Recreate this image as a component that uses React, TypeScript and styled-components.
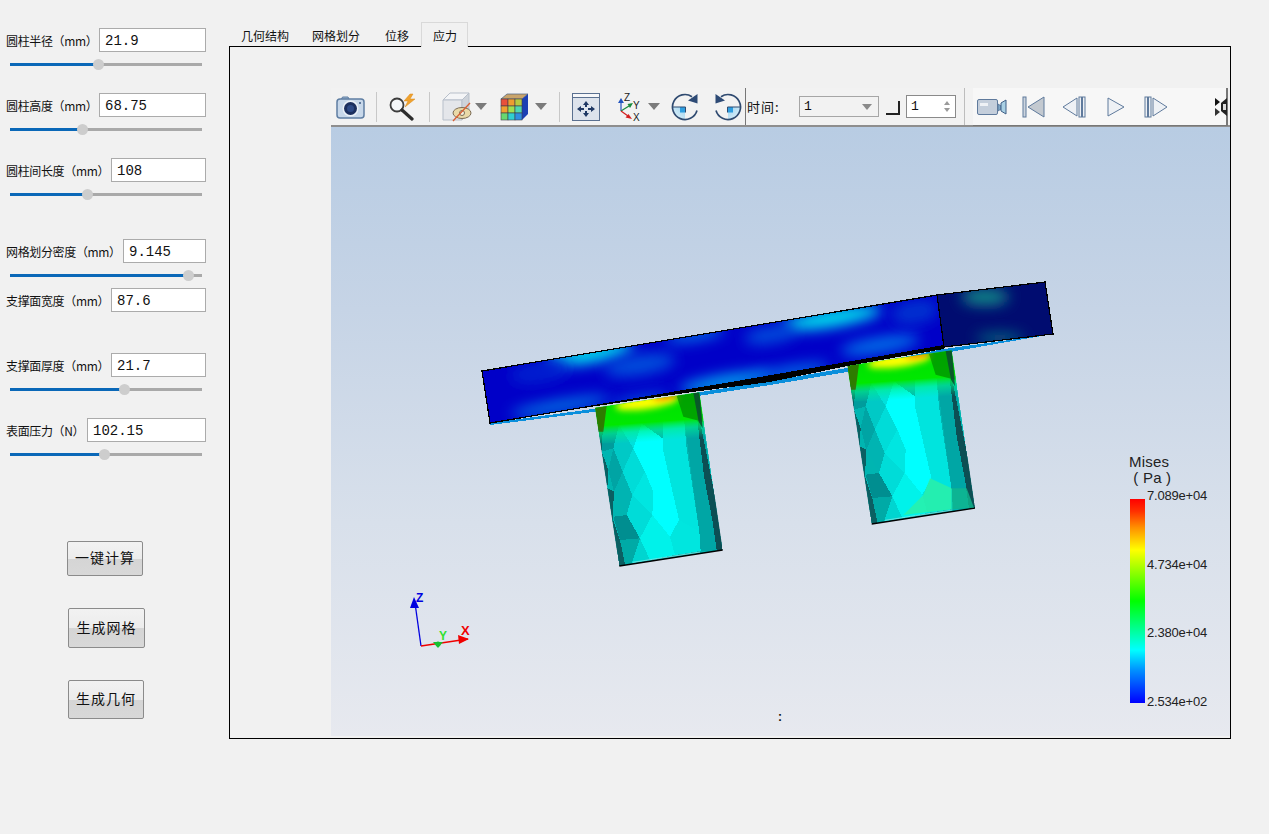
import React from "react";
import styled, { createGlobalStyle } from "styled-components";

const GlobalStyle = createGlobalStyle`
  html, body {
    margin: 0;
    padding: 0;
    background: #f1f1f1;
    overflow: hidden;
  }
  * { box-sizing: border-box; }
`;

const cjk = `"Noto Sans CJK SC", "Noto Sans", sans-serif`;

const Page = styled.div`
  width: 1269px;
  height: 834px;
  display: flex;
  background: #f1f1f1;
  color: #111;
  font-family: ${cjk};
`;

const SidePanel = styled.aside`
  width: 229px;
  padding-top: 28px;
  display: flex;
  flex-direction: column;
`;

const ParamGroup = styled.div<{ $h: number }>`
  height: ${(p) => p.$h}px;
`;

const ParamRow = styled.div`
  width: 206px;
  height: 24px;
  padding-left: 6px;
  display: flex;
  align-items: center;
  justify-content: space-between;
`;

const ParamLabel = styled.span`
  font-size: 12px;
  white-space: nowrap;
  letter-spacing: -0.35px;
`;

const ValueBox = styled.div<{ $w: number }>`
  width: ${(p) => p.$w}px;
  height: 24px;
  padding-left: 5px;
  background: #fff;
  border: 1px solid #ababab;
  font: 14px/25px "Liberation Mono", monospace;
`;

const Slider = styled.div`
  position: relative;
  width: 192px;
  height: 3px;
  margin: 11px 0 0 10px;
  background: #a9a9a9;
`;

const SliderFill = styled.div`
  height: 3px;
  background: #0a68b8;
`;

const SliderThumb = styled.div`
  position: absolute;
  top: -4px;
  width: 11px;
  height: 11px;
  margin-left: -5px;
  border-radius: 50%;
  background: #cdcdcd;
`;

const ActionList = styled.div`
  margin-top: 58px;
  display: flex;
  flex-direction: column;
  gap: 32px;
`;

const ActionButton = styled.div<{ $w: number; $h: number; $ml: number }>`
  width: ${(p) => p.$w}px;
  height: ${(p) => p.$h}px;
  margin-left: ${(p) => p.$ml}px;
  padding-bottom: 3px;
  display: flex;
  align-items: center;
  justify-content: center;
  border: 1px solid #8b8b8b;
  border-radius: 2px;
  font-size: 14px;
  letter-spacing: 1px;
  background: linear-gradient(#f2f2f2 0%, #ececec 50%, #d5d5d5 51%, #d8d8d8 100%);
`;

const Main = styled.main`
  width: 1002px;
  padding-top: 22px;
`;

const TabBar = styled.div`
  display: flex;
  height: 24px;
`;

const Tab = styled.div<{ $active?: boolean; $w: number }>`
  width: ${(p) => p.$w}px;
  height: 25px;
  padding-left: 11px;
  font-size: 12px;
  line-height: 25px;
  position: relative;
  z-index: 1;
  border: 1px solid ${(p) => (p.$active ? "#d9d9d9" : "transparent")};
  border-bottom: 0;
  background: ${(p) => (p.$active ? "#f1f1f1" : "transparent")};
`;

const Pane = styled.div`
  width: 1002px;
  height: 693px;
  padding: 41px 0 0 101px;
  border: 1px solid #000;
`;

const Toolbar = styled.div`
  width: 899px;
  height: 39px;
  display: flex;
  align-items: center;
  background: #f2f2f2;
  border-bottom: 2px solid #8e8e8e;
`;

const Tool = styled.span<{ $ml?: number }>`
  display: flex;
  flex: none;
  margin-left: ${(p) => p.$ml ?? 0}px;
`;

const ToolSep = styled.div<{ $ml: number }>`
  width: 1px;
  height: 30px;
  flex: none;
  margin-left: ${(p) => p.$ml}px;
  background: #c8c8c8;
`;

const HardSep = styled.div<{ $ml: number; $dark?: boolean }>`
  width: 1px;
  height: 37px;
  flex: none;
  margin-left: ${(p) => p.$ml}px;
  background: ${(p) => (p.$dark ? "#777" : "#bdbdbd")};
`;

const TimeLabel = styled.span`
  flex: none;
  width: 52px;
  margin-left: 1px;
  font-size: 13px;
  letter-spacing: 1px;
`;

const Combo = styled.div`
  width: 80px;
  height: 21px;
  flex: none;
  padding: 0 6px 0 4px;
  display: flex;
  align-items: center;
  justify-content: space-between;
  border: 1px solid #a6a6a6;
  font: 13px "Liberation Mono", monospace;
`;

const ComboArrow = styled.i`
  border-left: 5px solid transparent;
  border-right: 5px solid transparent;
  border-top: 6px solid #8a8a8a;
`;

const CornerBox = styled.div`
  width: 14px;
  height: 14px;
  flex: none;
  margin: 2px 0 0 7px;
  border-right: 2px solid #222;
  border-bottom: 2px solid #222;
`;

const Spin = styled.div`
  width: 50px;
  height: 23px;
  flex: none;
  margin-left: 6px;
  padding: 0 5px 0 4px;
  display: flex;
  align-items: center;
  justify-content: space-between;
  background: #fff;
  border: 1px solid #8a8a8a;
  font: 13px "Liberation Mono", monospace;
`;

const SpinArrows = styled.div`
  display: flex;
  flex-direction: column;
  gap: 3px;
`;

const SpinArrow = styled.i<{ $down?: boolean }>`
  display: block;
  border-left: 3px solid transparent;
  border-right: 3px solid transparent;
  border-${(p) => (p.$down ? "top" : "bottom")}: 4px solid #9a9a9a;
`;

const PlayerBar = styled.div`
  width: 255px;
  height: 37px;
  flex: none;
  margin-left: 8px;
  display: flex;
  align-items: center;
  background: #f7f7f7;
  border-right: 2px solid #777;
  box-shadow: 0 1px 0 #777;
`;

const Viewport = styled.div`
  position: relative;
  width: 899px;
  height: 609px;
  background: linear-gradient(#b8cce3 0%, #c6d4e6 30%, #d8e0eb 65%, #e7e9ef 100%);
`;

const Scene = styled.svg`
  display: block;
`;

const ViewTag = styled.span`
  position: absolute;
  left: 447px;
  top: 583px;
  font: bold 12px "Liberation Sans", sans-serif;
`;

const Legend = styled.div`
  position: absolute;
  left: 798px;
  top: 327px;
  font-family: "Liberation Sans", sans-serif;
  color: #222;
`;

const LegendTitle = styled.div`
  font-size: 15px;
  line-height: 16px;
  letter-spacing: 0.2px;
  white-space: pre;
`;

const LegendBody = styled.div`
  display: flex;
  margin-top: 2px;
`;

const ColorBar = styled.div`
  width: 15px;
  height: 204px;
  margin: 11px 2px 0 1px;
  background: linear-gradient(#ff0000 0%, #ff3000 6%, #ff9000 14%, #ffff00 25%, #00ff00 50%, #00ffff 74%, #0090ff 84%, #0000ff 100%);
`;

const LegendTicks = styled.div`
  height: 220px;
  margin-top: 1px;
  display: flex;
  flex-direction: column;
  justify-content: space-between;
  font-size: 13px;
  line-height: 14px;
  letter-spacing: -0.2px;
`;

const params = [
  { label: "圆柱半径（mm）", value: "21.9", box: 107, thumb: 88, h: 65 },
  { label: "圆柱高度（mm）", value: "68.75", box: 107, thumb: 72, h: 65 },
  { label: "圆柱间长度（mm）", value: "108", box: 95, thumb: 77, h: 81 },
  { label: "网格划分密度（mm）", value: "9.145", box: 83, thumb: 178, h: 49 },
  { label: "支撑面宽度（mm）", value: "87.6", box: 95, thumb: null, h: 65 },
  { label: "支撑面厚度（mm）", value: "21.7", box: 95, thumb: 114, h: 65 },
  { label: "表面压力（N）", value: "102.15", box: 119, thumb: 94, h: 65 },
];

const actions = [
  { text: "一键计算", w: 76, h: 35, ml: 67 },
  { text: "生成网格", w: 77, h: 40, ml: 68 },
  { text: "生成几何", w: 76, h: 39, ml: 68 },
];

const tabs = [
  { text: "几何结构", w: 71 },
  { text: "网格划分", w: 73 },
  { text: "位移", w: 48 },
  { text: "应力", w: 47, active: true },
];

const ticks = ["7.089e+04", "4.734e+04", "2.380e+04", "2.534e+02"];

const DropArrow = ({ ml }: { ml: number }) => (
  <Tool $ml={ml}>
    <svg width="12" height="7" viewBox="0 0 12 7">
      <path d="M0 0H12L6 7Z" fill="#7b7b7b" />
    </svg>
  </Tool>
);

const CameraIcon = () => (
  <svg width="29" height="24" viewBox="0 0 29 24">
    <path d="M5 5L6.500 2H12L13.500 5Z" fill="#9db4cf" stroke="#5f7ea3" />
    <rect x="1" y="4" width="27" height="19" rx="3" fill="#c8d8ea" stroke="#5f7ea3" strokeWidth="1.500" />
    <circle cx="14.500" cy="13.500" r="8" fill="#eaf0f7" />
    <circle cx="14.500" cy="13.500" r="6.500" fill="#1c2f5e" />
    <circle cx="14.500" cy="13.500" r="3.500" fill="#2e4a86" />
    <circle cx="24" cy="8" r="1" fill="#3c5a85" />
  </svg>
);

const SearchBoltIcon = () => (
  <svg width="28" height="28" viewBox="0 0 28 28">
    <path d="M22 1L16 8H20L17 14L27 6H22L25 1Z" fill="#f0a22e" stroke="#d98a1c" strokeWidth="0.5" />
    <circle cx="9" cy="12" r="6.500" fill="#f5f7f9" stroke="#3d3d3d" strokeWidth="1.800" />
    <path d="M14 17L24 26" stroke="#2d2d2d" strokeWidth="3.200" strokeLinecap="round" />
  </svg>
);

const CubeEyeIcon = () => (
  <svg width="32" height="30" viewBox="0 0 32 30">
    <path d="M1 8L8 1H27L20 8Z" fill="#f4f5f7" stroke="#b7bfca" />
    <path d="M1 8H20V28H1Z" fill="#e4e6ea" stroke="#b7bfca" />
    <path d="M20 8L27 1V20L20 28Z" fill="#ced3da" stroke="#b7bfca" />
    <ellipse cx="20" cy="21" rx="9" ry="5.500" fill="#e9d9a8" stroke="#7c6c55" />
    <circle cx="20" cy="21" r="2.500" fill="#f4f0e0" stroke="#7c6c55" />
    <path d="M11 29L28 11" stroke="#d95e32" strokeWidth="1.300" />
  </svg>
);

const gridColors = [
  ["#e9503a", "#ee9d30", "#b9ca40"],
  ["#f0a030", "#9fe050", "#4fd8b0"],
  ["#68d870", "#2fd0d0", "#2f8fe0"],
];

const ColorCubeIcon = () => (
  <svg width="29" height="28" viewBox="0 0 29 28">
    <path d="M1 6L7 1H28L22 6Z" fill="#c9a46a" stroke="#47607f" strokeWidth="0.700" />
    <path d="M22 6L28 1V21L22 27Z" fill="#1c40b4" />
    {gridColors.map((row, r) =>
      row.map((c, k) => <rect key={`${r}-${k}`} x={1 + k * 7} y={6 + r * 7} width="7" height="7" fill={c} stroke="#3c3f4c" strokeWidth="0.600" />)
    )}
  </svg>
);

const FitIcon = () => (
  <svg width="28" height="28" viewBox="0 0 28 28" fill="#1f3864">
    <rect x="0.500" y="0.500" width="27" height="27" fill="#dde3ec" stroke="#5a7090" />
    <rect x="1" y="1" width="26" height="3" fill="#f6f7f9" />
    <path d="M1 4.500H27" stroke="#5a7090" />
    <path d="M14 8L17 12H15V14H13V12H11Z" />
    <path d="M14 24L11 20H13V18H15V20H17Z" />
    <path d="M5 16L9 13V15H12V17H9V19Z" />
    <path d="M23 16L19 13V15H16V17H19V19Z" />
  </svg>
);

const AxesIcon = () => (
  <svg width="31" height="28" viewBox="0 0 31 28" fontFamily="Liberation Sans, sans-serif" fontSize="10" overflow="visible">
    <path d="M6 18V9" stroke="#2255c0" strokeWidth="1.200" />
    <path d="M6 5L9 10H3Z" fill="#2255c0" />
    <path d="M6 18L14 13" stroke="#178a3c" strokeWidth="1.200" />
    <path d="M18 10L15 15L12.500 11Z" fill="#178a3c" />
    <path d="M6 18L13 23" stroke="#d32020" strokeWidth="1.200" />
    <path d="M17 26L10.500 24.500L13.500 21Z" fill="#d32020" />
    <text x="9" y="8" fill="#222">Z</text>
    <text x="18" y="16" fill="#222">Y</text>
    <text x="18" y="28" fill="#222">X</text>
  </svg>
);

const RotateIcon = ({ flip }: { flip?: boolean }) => (
  <svg width="30" height="30" viewBox="0 0 30 30">
    <defs>
      <linearGradient id="quarterFill" x1="0" y1="1" x2="1" y2="0">
        <stop offset="0" stopColor="#e6f4fb" />
        <stop offset="1" stopColor="#9fd4ef" />
      </linearGradient>
    </defs>
    <g transform={flip ? "matrix(-1 0 0 1 30 0)" : undefined}>
      <path d="M14 15H1.500A12.500 12.500 0 0 0 14 27.500Z" fill="url(#quarterFill)" />
      <rect x="9" y="15" width="5" height="5.500" fill="#2f9ee0" />
      <path d="M1.500 15H14.500V20.500" stroke="#2f4a70" fill="none" />
      <path d="M26 18.500A12.500 12.500 0 1 1 21 4.700" stroke="#2f4a70" strokeWidth="1.700" fill="none" />
      <path d="M26.500 2L26.500 11.500L17 8.500Z" fill="#2d4a75" />
    </g>
  </svg>
);

const VideoIcon = () => (
  <svg width="30" height="18" viewBox="0 0 30 18">
    <rect x="0.500" y="1.500" width="20" height="15" rx="1.500" fill="#c4cedb" stroke="#5f7a9c" />
    <rect x="3" y="5" width="8" height="3" fill="#eef1f5" />
    <path d="M21 6L24 8V11L21 13Z" fill="#7fa9c8" stroke="#5f7a9c" />
    <path d="M24 5L29 2V16L24 13Z" fill="#a9d0e4" stroke="#3f5f86" />
  </svg>
);

const FirstIcon = () => (
  <svg width="23" height="22" viewBox="0 0 23 22">
    <rect x="1" y="1" width="3" height="20" fill="#ccd4de" stroke="#5f7a9c" />
    <path d="M22 1V21L6 11Z" fill="#c3c9d0" stroke="#5f7a9c" />
  </svg>
);

const PrevIcon = () => (
  <svg width="24" height="22" viewBox="0 0 24 22" fill="#eef1f5" stroke="#5f7a9c">
    <path d="M15 2V20L1 11Z" />
    <rect x="17" y="1" width="2.500" height="20" />
    <rect x="20.500" y="1" width="2.500" height="20" />
  </svg>
);

const PlayIcon = () => (
  <svg width="18" height="20" viewBox="0 0 18 20" fill="#eef1f5" stroke="#5f7a9c">
    <path d="M1 1V19L17 10Z" />
  </svg>
);

const NextIcon = () => (
  <svg width="24" height="22" viewBox="0 0 24 22" fill="#eef1f5" stroke="#5f7a9c">
    <rect x="1" y="1" width="2.500" height="20" />
    <rect x="4.500" y="1" width="2.500" height="20" />
    <path d="M9 2V20L23 11Z" />
  </svg>
);

const HandleIcon = () => (
  <svg width="12" height="20" viewBox="0 0 12 20">
    <path d="M0 1L5 5L0 9Z" fill="#111" />
    <path d="M0 11L5 15L0 19Z" fill="#333" />
    <path d="M12 1L6 6L6 14L12 19Z" fill="#222" />
    <path d="M8 7H11V13H8Z" fill="#ddd" />
  </svg>
);

// 3x crop coordinates are kept for the column facets, the group scales them back down
const facets: [string, string][] = [
  ["375,398 688,352 758,825 448,873", "#00b5b1"],
  ["385,450 447,450 430,520 395,530", "#009c9c"],
  ["447,450 490,520 458,590 430,520", "#00c9c6"],
  ["415,585 430,520 458,590 432,650", "#00a4a4"],
  ["458,590 490,520 525,590 487,660", "#00dcd8"],
  ["432,650 458,590 487,660 470,720", "#00b4b2"],
  ["487,660 525,590 550,650 547,720", "#00e6e1"],
  ["470,720 487,660 547,720 510,790", "#00dcd8"],
  ["430,725 470,720 510,790 450,795", "#008e90"],
  ["450,795 510,790 485,865 448,873", "#00aaa6"],
  ["510,790 547,720 600,785 615,840 540,855", "#00f2ea"],
  ["485,865 510,790 540,855", "#00d5d0"],
  ["450,440 515,445 490,520 447,450", "#00e0dc"],
  ["515,445 578,490 578,520 627,735 600,785 547,720 550,650 525,590 490,520", "#00ffff"],
  ["578,440 642,430 650,520 688,770 627,735 578,520", "#00e4de"],
  ["600,785 627,735 688,770 692,828 615,840", "#00e6df"],
  ["642,430 695,420 738,725 748,826 692,828 688,770", "#00a6a5"],
  ["378,410 398,470 395,530 415,585 412,640 432,650 428,730 450,795 466,872 448,873 420,710 398,570", "#0b5f62"],
  ["672,354 692,450 716,570 748,730 758,825 740,826 728,740 703,610 686,470", "#0c4f54"],
];

const plateBlobs: [number, number, number, number, string][] = [
  [590, 354, 44, 9, "#00e0ee"],
  [640, 365, 36, 10, "#0050dc"],
  [540, 372, 30, 10, "#0020d0"],
  [695, 335, 30, 6, "#0070e4"],
  [832, 318, 50, 9, "#00e4ee"],
  [770, 335, 26, 8, "#0050dc"],
  [725, 382, 46, 7, "#00a8f0"],
  [640, 400, 30, 5, "#0050dc"],
  [790, 372, 40, 6, "#0070e8"],
  [880, 345, 40, 8, "#0070e8"],
  [560, 406, 50, 6, "#0078e4"],
  [915, 312, 24, 12, "#0030d0"],
];

const DeformedModel = () => (
  <g>
    <defs>
      <filter id="soft" x="-60%" y="-200%" width="220%" height="500%">
        <feGaussianBlur stdDeviation="7" />
      </filter>
      <filter id="softTop" x="-40%" y="-150%" width="180%" height="400%">
        <feGaussianBlur stdDeviation="10" />
      </filter>
      <clipPath id="plateClip">
        <polygon points="482,371 937,295 944,347 490,423" />
      </clipPath>
      <clipPath id="sideClip">
        <polygon points="937,295 1045,282 1053,334 944,347" />
      </clipPath>
      <clipPath id="colClip">
        <polygon points="375,398 688,352 758,825 448,873" />
      </clipPath>
      <linearGradient id="colTop" gradientUnits="userSpaceOnUse" x1="530" y1="370" x2="540" y2="500">
        <stop offset="0" stopColor="#00e000" />
        <stop offset="0.55" stopColor="#00e800" />
        <stop offset="0.75" stopColor="#00f088" stopOpacity="0.6" />
        <stop offset="1" stopColor="#00f0a0" stopOpacity="0" />
      </linearGradient>
      <g id="column">
        <g clipPath="url(#colClip)">
          {facets.map(([points, fill]) => (
            <polygon key={points} points={points} fill={fill} shapeRendering="crispEdges" />
          ))}
          <polygon points="375,390 700,345 705,505 380,505" fill="url(#colTop)" />
          <ellipse cx="530" cy="382" rx="95" ry="20" fill="#ffff00" transform="rotate(-8 530 382)" filter="url(#softTop)" />
          <ellipse cx="588" cy="364" rx="40" ry="8" fill="#ff6a00" transform="rotate(-8 588 364)" filter="url(#softTop)" />
          <polygon points="375,398 410,393 400,470 385,470" fill="#3a6200" opacity="0.8" />
          <polygon points="620,362 688,352 698,440 640,425" fill="#007a00" opacity="0.6" />
          <polygon points="670,354 688,352 698,460 686,440" fill="#0b4a30" opacity="0.85" />
        </g>
        <path d="M448 873L758 825" stroke="#000" strokeWidth="4" />
        <path d="M488 862L690 831" stroke="#9fe8e8" strokeWidth="2" />
      </g>
    </defs>

    <polygon points="490,423 593,409 770,381 847,368 944,349 1053,334 944,353 847,372 770,385 593,412 490,425" fill="#0a8fdc" shapeRendering="crispEdges" />

    <g transform="translate(470 275) scale(0.33333)">
      <use href="#column" />
    </g>
    <g transform="translate(722.330 233) scale(0.33333)">
      <use href="#column" />
      <polygon points="543,846 603,786 623,736 688,766 688,829" fill="#30f0a0" opacity="0.75" />
      <polygon points="688,766 733,766 755,824 688,829" fill="#10b88e" opacity="0.8" />
    </g>

    <g clipPath="url(#plateClip)">
      <rect x="470" y="280" width="480" height="150" fill="#0000c8" />
      {plateBlobs.map(([cx, cy, rx, ry, c]) => (
        <ellipse key={`${cx}-${cy}`} cx={cx} cy={cy} rx={rx} ry={ry} fill={c} transform={`rotate(-9.5 ${cx} ${cy})`} filter="url(#soft)" />
      ))}
    </g>
    <g clipPath="url(#sideClip)">
      <rect x="930" y="275" width="130" height="80" fill="#000c70" />
      <ellipse cx="985" cy="297" rx="24" ry="8" fill="#128a88" filter="url(#soft)" />
      <ellipse cx="1000" cy="338" rx="24" ry="5" fill="#0a6c80" filter="url(#soft)" />
    </g>
    <polygon points="570,410 944,345 944,349 847,366 770,382 700,391 650,398" fill="#000" shapeRendering="crispEdges" />
    <path d="M944 347L490 423L482 371L937 295L1045 282L1053 334L944 347L937 295" fill="none" stroke="#000" strokeWidth="1.200" shapeRendering="crispEdges" />
  </g>
);

const AxisTriad = () => (
  <g fontFamily="Liberation Sans, sans-serif" fontWeight="bold" fontSize="13">
    <path d="M421 646L415 603" stroke="#0000e0" strokeWidth="1.300" />
    <path d="M414 597L419 608H410Z" fill="#0000e0" />
    <text x="416" y="602" fill="#0000e0" fontSize="12">Z</text>
    <path d="M421 646L468 639" stroke="#f00000" strokeWidth="1.300" />
    <path d="M469 639L458 635L459 644Z" fill="#f00000" />
    <text x="461" y="635" fill="#f00000">X</text>
    <path d="M438 648L433 642H443Z" fill="#18c030" />
    <circle cx="438" cy="644" r="2.500" fill="#18c030" />
    <text x="439" y="640" fill="#30e030" fontSize="12">Y</text>
  </g>
);

export default function App() {
  return (
    <Page>
      <GlobalStyle />
      <SidePanel>
        {params.map((p) => (
          <ParamGroup key={p.label} $h={p.h}>
            <ParamRow>
              <ParamLabel>{p.label}</ParamLabel>
              <ValueBox $w={p.box}>{p.value}</ValueBox>
            </ParamRow>
            {p.thumb !== null && (
              <Slider>
                <SliderFill style={{ width: p.thumb }} />
                <SliderThumb style={{ left: p.thumb }} />
              </Slider>
            )}
          </ParamGroup>
        ))}
        <ActionList>
          {actions.map((a) => (
            <ActionButton key={a.text} $w={a.w} $h={a.h} $ml={a.ml}>
              {a.text}
            </ActionButton>
          ))}
        </ActionList>
      </SidePanel>

      <Main>
        <TabBar>
          {tabs.map((t) => (
            <Tab key={t.text} $w={t.w} $active={t.active}>
              {t.text}
            </Tab>
          ))}
        </TabBar>
        <Pane>
          <Toolbar>
            <Tool $ml={5}><CameraIcon /></Tool>
            <ToolSep $ml={11} />
            <Tool $ml={11}><SearchBoltIcon /></Tool>
            <ToolSep $ml={13} />
            <Tool $ml={12}><CubeEyeIcon /></Tool>
            <DropArrow ml={1} />
            <Tool $ml={13}><ColorCubeIcon /></Tool>
            <DropArrow ml={6} />
            <ToolSep $ml={12} />
            <Tool $ml={12}><FitIcon /></Tool>
            <Tool $ml={15}><AxesIcon /></Tool>
            <DropArrow ml={2} />
            <Tool $ml={11}><RotateIcon /></Tool>
            <Tool $ml={11}><RotateIcon flip /></Tool>
            <HardSep $ml={3} $dark />
            <TimeLabel>时间:</TimeLabel>
            <Combo>
              1
              <ComboArrow />
            </Combo>
            <CornerBox />
            <Spin>
              1
              <SpinArrows>
                <SpinArrow />
                <SpinArrow $down />
              </SpinArrows>
            </Spin>
            <HardSep $ml={8} />
            <PlayerBar>
              <Tool $ml={4}><VideoIcon /></Tool>
              <Tool $ml={15}><FirstIcon /></Tool>
              <Tool $ml={17}><PrevIcon /></Tool>
              <Tool $ml={21}><PlayIcon /></Tool>
              <Tool $ml={19}><NextIcon /></Tool>
              <Tool $ml={47}><HandleIcon /></Tool>
            </PlayerBar>
          </Toolbar>
          <Viewport>
            <Scene width="899" height="609" viewBox="331 127 899 609">
              <DeformedModel />
              <AxisTriad />
            </Scene>
            <ViewTag>:</ViewTag>
            <Legend>
              <LegendTitle>
                {"Mises\n ( Pa )"}
              </LegendTitle>
              <LegendBody>
                <ColorBar />
                <LegendTicks>
                  {ticks.map((t) => (
                    <span key={t}>{t}</span>
                  ))}
                </LegendTicks>
              </LegendBody>
            </Legend>
          </Viewport>
        </Pane>
      </Main>
    </Page>
  );
}
